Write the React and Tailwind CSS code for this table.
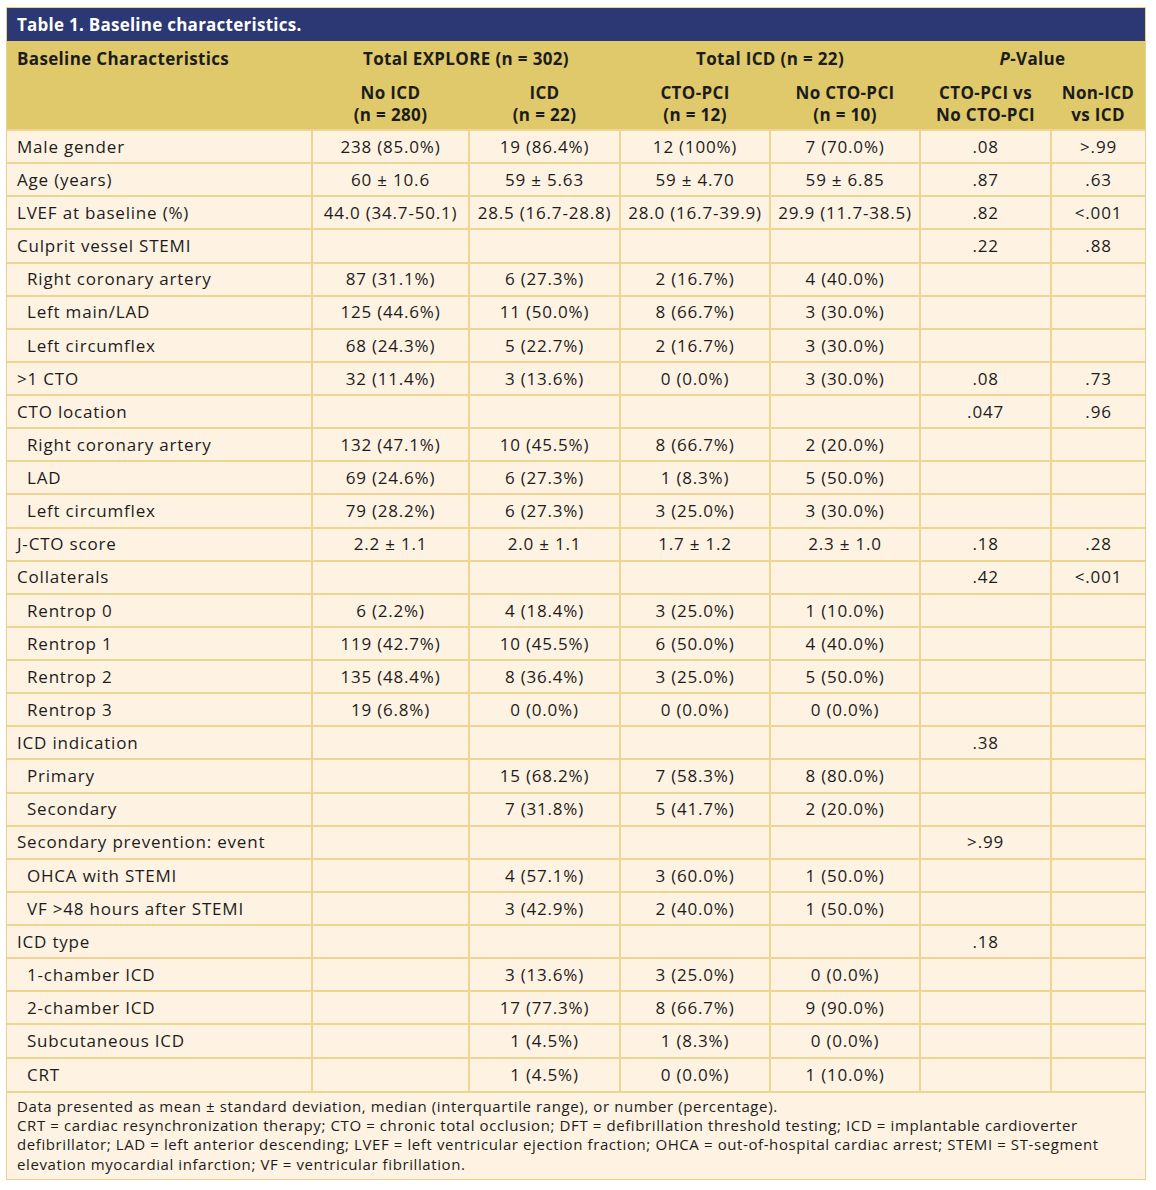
const rows = [
  ["Male gender", 0, "238 (85.0%)", "19 (86.4%)", "12 (100%)", "7 (70.0%)", ".08", ">.99"],
  ["Age (years)", 0, "60 ± 10.6", "59 ± 5.63", "59 ± 4.70", "59 ± 6.85", ".87", ".63"],
  ["LVEF at baseline (%)", 0, "44.0 (34.7-50.1)", "28.5 (16.7-28.8)", "28.0 (16.7-39.9)", "29.9 (11.7-38.5)", ".82", "<.001"],
  ["Culprit vessel STEMI", 0, "", "", "", "", ".22", ".88"],
  ["Right coronary artery", 1, "87 (31.1%)", "6 (27.3%)", "2 (16.7%)", "4 (40.0%)", "", ""],
  ["Left main/LAD", 1, "125 (44.6%)", "11 (50.0%)", "8 (66.7%)", "3 (30.0%)", "", ""],
  ["Left circumflex", 1, "68 (24.3%)", "5 (22.7%)", "2 (16.7%)", "3 (30.0%)", "", ""],
  [">1 CTO", 0, "32 (11.4%)", "3 (13.6%)", "0 (0.0%)", "3 (30.0%)", ".08", ".73"],
  ["CTO location", 0, "", "", "", "", ".047", ".96"],
  ["Right coronary artery", 1, "132 (47.1%)", "10 (45.5%)", "8 (66.7%)", "2 (20.0%)", "", ""],
  ["LAD", 1, "69 (24.6%)", "6 (27.3%)", "1 (8.3%)", "5 (50.0%)", "", ""],
  ["Left circumflex", 1, "79 (28.2%)", "6 (27.3%)", "3 (25.0%)", "3 (30.0%)", "", ""],
  ["J-CTO score", 0, "2.2 ± 1.1", "2.0 ± 1.1", "1.7 ± 1.2", "2.3 ± 1.0", ".18", ".28"],
  ["Collaterals", 0, "", "", "", "", ".42", "<.001"],
  ["Rentrop 0", 1, "6 (2.2%)", "4 (18.4%)", "3 (25.0%)", "1 (10.0%)", "", ""],
  ["Rentrop 1", 1, "119 (42.7%)", "10 (45.5%)", "6 (50.0%)", "4 (40.0%)", "", ""],
  ["Rentrop 2", 1, "135 (48.4%)", "8 (36.4%)", "3 (25.0%)", "5 (50.0%)", "", ""],
  ["Rentrop 3", 1, "19 (6.8%)", "0 (0.0%)", "0 (0.0%)", "0 (0.0%)", "", ""],
  ["ICD indication", 0, "", "", "", "", ".38", ""],
  ["Primary", 1, "", "15 (68.2%)", "7 (58.3%)", "8 (80.0%)", "", ""],
  ["Secondary", 1, "", "7 (31.8%)", "5 (41.7%)", "2 (20.0%)", "", ""],
  ["Secondary prevention: event", 0, "", "", "", "", ">.99", ""],
  ["OHCA with STEMI", 1, "", "4 (57.1%)", "3 (60.0%)", "1 (50.0%)", "", ""],
  ["VF >48 hours after STEMI", 1, "", "3 (42.9%)", "2 (40.0%)", "1 (50.0%)", "", ""],
  ["ICD type", 0, "", "", "", "", ".18", ""],
  ["1-chamber ICD", 1, "", "3 (13.6%)", "3 (25.0%)", "0 (0.0%)", "", ""],
  ["2-chamber ICD", 1, "", "17 (77.3%)", "8 (66.7%)", "9 (90.0%)", "", ""],
  ["Subcutaneous ICD", 1, "", "1 (4.5%)", "1 (8.3%)", "0 (0.0%)", "", ""],
  ["CRT", 1, "", "1 (4.5%)", "0 (0.0%)", "1 (10.0%)", "", ""],
];

export default function App() {
  return (
    <div className="bg-white min-h-screen pt-[7px] pl-[6px] font-['Open_Sans',sans-serif] text-[#1c1c1c]">
      <div className="w-[1140px] border border-[#e6d08a]">
        <div className="bg-[#2b3873] h-[33px] flex items-center px-[10px] pt-[1px] text-white font-bold text-[17px] tracking-[0.25px]">
          Table 1. Baseline characteristics.
        </div>
        <table className="w-full border-collapse table-fixed text-[17px] tracking-[0.8px]">
          <colgroup>
            <col className="w-[305px]" />
            <col className="w-[157px]" />
            <col className="w-[151px]" />
            <col className="w-[150px]" />
            <col className="w-[150px]" />
            <col className="w-[131px]" />
            <col />
          </colgroup>
          <thead className="bg-[#dfc96a] tracking-[0.35px]">
            <tr className="h-[33px] align-middle">
              <th className="text-left px-[10px] pt-[2px] font-bold">Baseline Characteristics</th>
              <th colSpan={2} className="text-center pt-[2px] font-bold">Total EXPLORE (n = 302)</th>
              <th colSpan={2} className="text-center pt-[2px] font-bold">Total ICD (n = 22)</th>
              <th colSpan={2} className="text-center pt-[2px] font-bold">
                <i>P</i>-Value
              </th>
            </tr>
            <tr className="leading-[22px] align-top">
              <th className="pt-[8px] pb-[3px]"></th>
              <th className="text-center font-bold pt-[8px] pb-[3px]">No ICD<br />(n = 280)</th>
              <th className="text-center font-bold pt-[8px] pb-[3px]">ICD<br />(n = 22)</th>
              <th className="text-center font-bold pt-[8px] pb-[3px]">CTO-PCI<br />(n = 12)</th>
              <th className="text-center font-bold pt-[8px] pb-[3px]">No CTO-PCI<br />(n = 10)</th>
              <th className="text-center font-bold pt-[8px] pb-[3px]">CTO-PCI vs<br />No CTO-PCI</th>
              <th className="text-center font-bold pt-[8px] pb-[3px]">Non-ICD<br />vs ICD</th>
            </tr>
          </thead>
          <tbody className="bg-[#fef3e2]">
            {rows.map((r, i) => (
              <tr key={i} className="h-[33.14px]">
                <td className={`border-t-2 border-r-2 border-[#ecd690] whitespace-nowrap ${r[1] ? "pl-[20px]" : "pl-[10px]"}`}>
                  {r[0]}
                </td>
                {r.slice(2).map((c, j) => (
                  <td key={j} className="border-t-2 border-r-2 last:border-r-0 border-[#ecd690] text-center whitespace-nowrap">
                    {c}
                  </td>
                ))}
              </tr>
            ))}
          </tbody>
        </table>
        <div className="bg-[#fef3e2] border-t-2 border-[#ecd690] px-[10px] pt-[4px] pb-[5px] text-[15px] leading-[19.3px] tracking-[0.6px]">
          Data presented as mean ± standard deviation, median (interquartile range), or number (percentage).
          <br />
          CRT = cardiac resynchronization therapy; CTO = chronic total occlusion; DFT = defibrillation threshold testing; ICD = implantable cardioverter defibrillator; LAD = left anterior descending; LVEF = left ventricular ejection fraction; OHCA = out-of-hospital cardiac arrest; STEMI = ST-segment elevation myocardial infarction; VF = ventricular fibrillation.
        </div>
      </div>
    </div>
  );
}
